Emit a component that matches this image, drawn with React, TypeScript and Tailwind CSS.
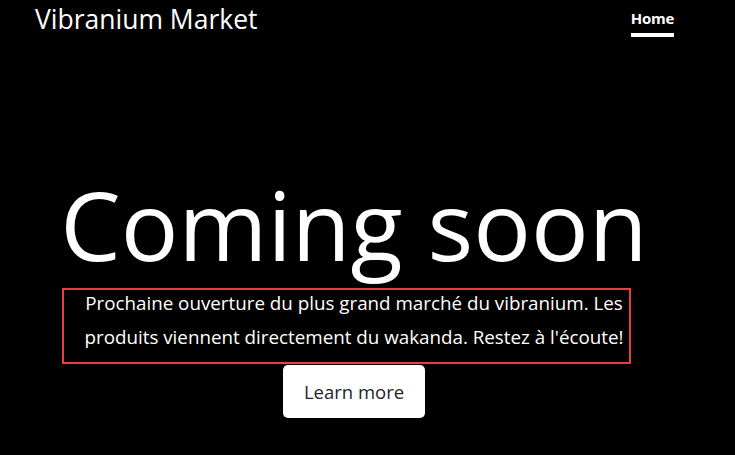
import React from "react";

const App = () => {
  return (
    <div className="min-h-screen w-full bg-black text-white font-['Open_Sans',sans-serif]">
      <header className="flex items-start justify-between pl-[35px] pr-[61px]">
        <div className="pt-[1px] text-[26.5px] leading-[36px]">Vibranium Market</div>
        <nav className="flex flex-col items-stretch pt-[8px]">
          <a href="#" className="text-[15px] font-bold leading-[20px] tracking-[-0.3px] text-white">
            Home
          </a>
          <span className="mt-[5px] block h-[4px] w-full bg-white" />
        </nav>
      </header>

      <main className="ml-[62px] flex w-[584px] flex-col items-center pt-[129px]">
        <h1 className="whitespace-nowrap text-[96px] font-normal leading-[115px]">Coming soon</h1>

        <div className="mt-[7px] h-[76px] w-[569px] self-start border-2 border-[#e93f3f] pl-[15px] text-center">
          <p className="-mt-[4px] whitespace-nowrap text-[18.8px] leading-[34px]">
            Prochaine ouverture du plus grand marché du vibranium. Les
            <br />
            produits viennent directement du wakanda. Restez à l'écoute!
          </p>
        </div>

        <button
          type="button"
          className="mt-[1px] flex h-[53px] w-[142px] items-center justify-center rounded-[5px] bg-white text-[18.5px] text-[#212529]"
        >
          Learn more
        </button>
      </main>
    </div>
  );
};

export default App;
